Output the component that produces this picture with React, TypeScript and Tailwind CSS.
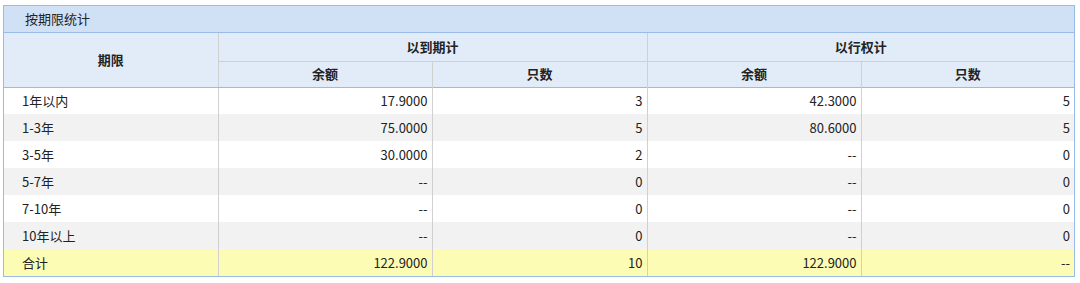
const rows = [
  { term: "1年以内", a: "17.9000", b: "3", c: "42.3000", d: "5" },
  { term: "1-3年", a: "75.0000", b: "5", c: "80.6000", d: "5" },
  { term: "3-5年", a: "30.0000", b: "2", c: "--", d: "0" },
  { term: "5-7年", a: "--", b: "0", c: "--", d: "0" },
  { term: "7-10年", a: "--", b: "0", c: "--", d: "0" },
  { term: "10年以上", a: "--", b: "0", c: "--", d: "0" },
];

const font = { fontFamily: '"Noto Sans CJK SC", "Noto Sans", sans-serif' };

export default function App() {
  const th = "border-r border-[#d0d0d0] font-bold text-[13px] text-[#222] text-center";
  const td = "border-r border-[#d0d0d0] text-[13px] text-[#222] text-right pr-[4px] h-[27px]";
  const tdFirst = "border-r border-[#d0d0d0] text-[13px] text-[#222] text-left pl-[18px] h-[27px]";
  const tdLast = "text-[13px] text-[#222] text-right pr-[4px] h-[27px]";

  return (
    <div className="bg-white w-[1080px] h-[283px] pt-[5px] pl-[3px]" style={font}>
      <div className="w-[1072px] border border-[#99bbe8]">
        <div className="h-[27px] bg-[#d0e0f5] border-b border-[#99bbe8] flex items-center pl-[21px] text-[13px] text-[#222]">
          按期限统计
        </div>
        <table className="w-full border-collapse table-fixed">
          <colgroup>
            <col className="w-[214px]" />
            <col className="w-[214px]" />
            <col className="w-[215px]" />
            <col className="w-[214px]" />
            <col />
          </colgroup>
          <thead className="bg-[#e2ecf8]">
            <tr className="h-[28px]">
              <th rowSpan={2} className={th + " border-b border-b-[#99bbe8]"}>期限</th>
              <th colSpan={2} className={th + " border-b border-b-[#d0d0d0]"}>以到期计</th>
              <th colSpan={2} className="font-bold text-[13px] text-[#222] text-center border-b border-[#d0d0d0]">以行权计</th>
            </tr>
            <tr className="h-[26px] border-b border-[#99bbe8]">
              <th className={th}>余额</th>
              <th className={th}>只数</th>
              <th className={th}>余额</th>
              <th className="font-bold text-[13px] text-[#222] text-center">只数</th>
            </tr>
          </thead>
          <tbody>
            {rows.map((r, i) => (
              <tr key={r.term} className={i % 2 === 1 ? "bg-[#f2f2f2]" : "bg-white"}>
                <td className={tdFirst}>{r.term}</td>
                <td className={td}>{r.a}</td>
                <td className={td}>{r.b}</td>
                <td className={td}>{r.c}</td>
                <td className={tdLast}>{r.d}</td>
              </tr>
            ))}
            <tr className="bg-[#fcfcb4]">
              <td className={tdFirst}>合计</td>
              <td className={td}>122.9000</td>
              <td className={td}>10</td>
              <td className={td}>122.9000</td>
              <td className={tdLast}>--</td>
            </tr>
          </tbody>
        </table>
      </div>
    </div>
  );
}
